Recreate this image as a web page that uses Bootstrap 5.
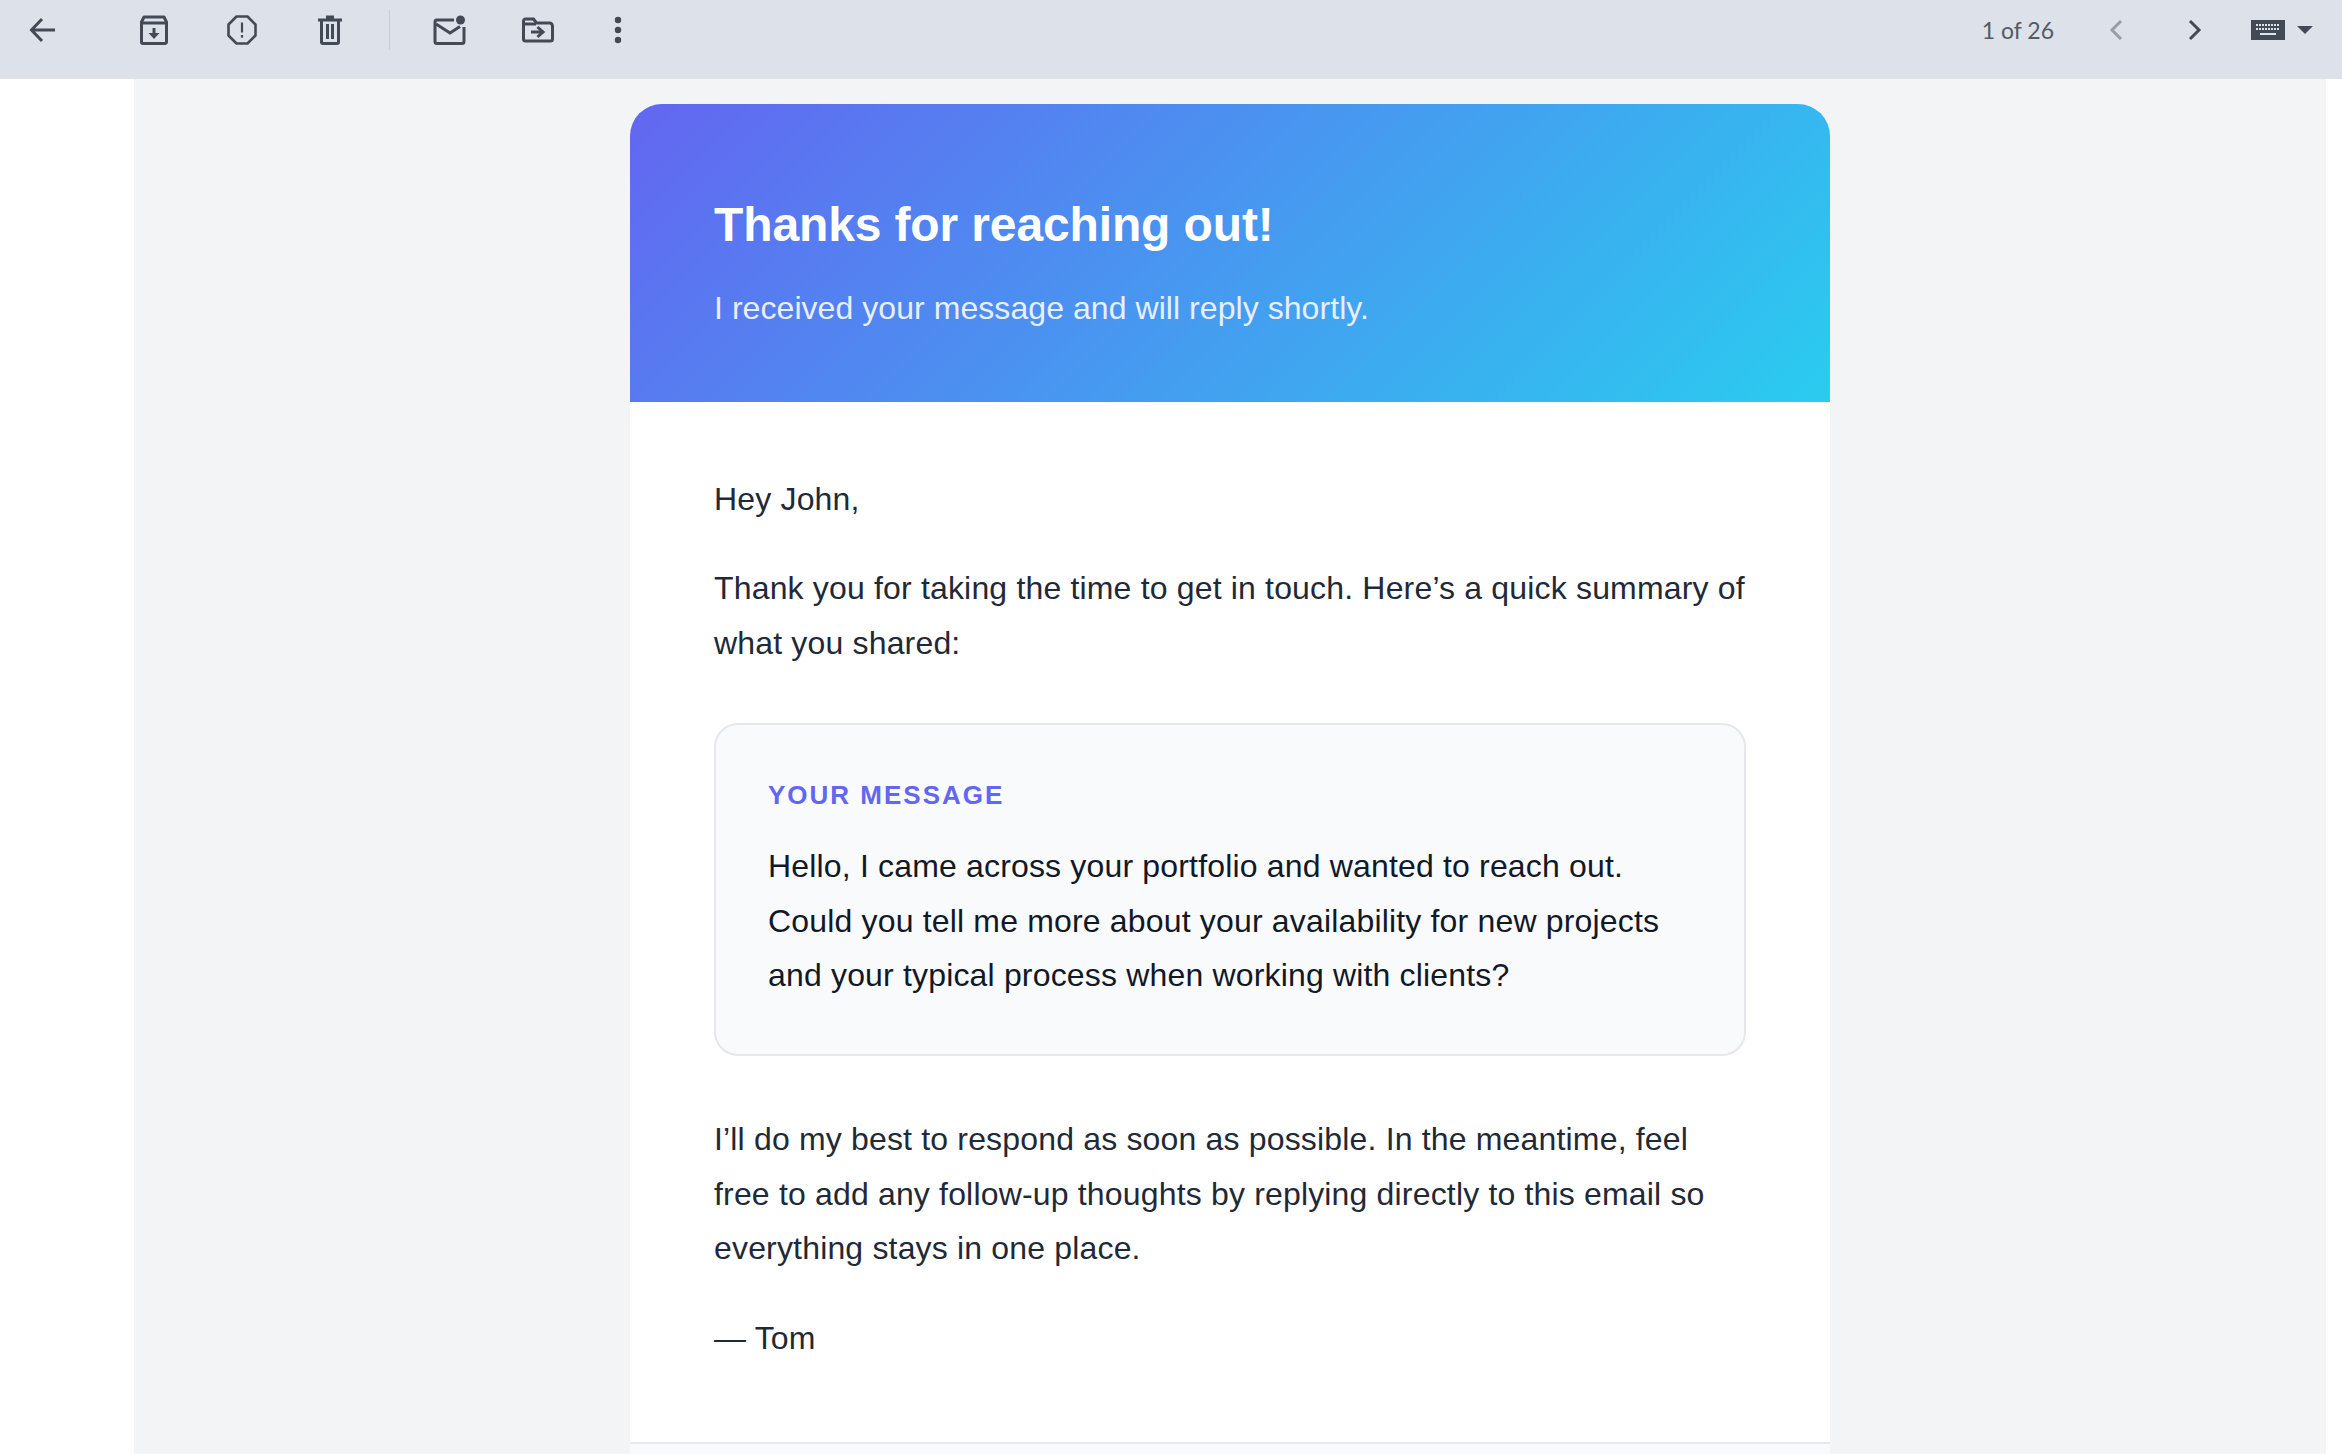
<!DOCTYPE html>
<html lang="en">
<head>
  <meta charset="UTF-8" />
  <title>Thanks for reaching out</title>
  <link href="https://cdn.jsdelivr.net/npm/bootstrap@5.3.0/dist/css/bootstrap.min.css" rel="stylesheet" />
  <style>
    body { height: 1454px; overflow: hidden; background: #fff; font-family: "Liberation Sans", Arial, sans-serif; }
    .mail-toolbar { height: 79px; background: #dde1e9; padding-bottom: 19px; }
    .tool-cell { width: 88px; height: 60px; }
    .tool-cell svg { display: block; }
    .tool-back { width: 84px; margin-right: 26px; }
    .tool-more { width: 72px; }
    .tool-divider { width: 1px; height: 40px; background: #c8ccd3; margin: 0 16px 0 15px; }
    .tool-count { font-family: Lato, "Liberation Sans", sans-serif; font-size: 23px; color: #555a63; margin-right: 32px; }
    .tool-nav { width: 60px; height: 60px; }
    .tool-next { margin-left: 19px; }
    .tool-kbd { margin-left: 26px; margin-right: 29px; }
    .mail-stage { background: #f3f4f6; margin: 0 16px 0 134px; height: 1375px; padding-top: 25px; }
    .mail-card { width: 1200px; margin-left: 496px; background: #fff; border-radius: 32px 32px 0 0; overflow: hidden; }
    .mail-hero { height: 298px; padding: 93px 84px 0; color: #fff; background: linear-gradient(135deg, #6366f1, #2accef); }
    .mail-hero h1 { font-size: 48px; font-weight: 700; line-height: 56px; letter-spacing: -0.13px; margin: 0 0 33px; }
    .mail-hero p { font-size: 32px; line-height: 44px; letter-spacing: 0.06px; margin: 0; color: #e8eefc; }
    .mail-body { padding: 70px 84px 77px; font-size: 32px; line-height: 54.4px; letter-spacing: 0.17px; color: #1f2937; }
    .mail-body p { margin: 0 0 35px; }
    .msg-box { background: #f9fafb; border: 2px solid #e5e7eb; border-radius: 24px; padding: 52px; margin: 53px 0 56px; color: #111827; }
    .msg-label { font-size: 26px; font-weight: 700; letter-spacing: 2px; line-height: 36px; color: #6366f1; margin-bottom: 26px; }
    .mail-foot { height: 40px; background: #f9fafb; border-top: 2px solid #e5e7eb; }
  </style>
</head>
<body>
<div class="mail-toolbar d-flex align-items-center">
  <div class="tool-cell tool-back d-flex align-items-center justify-content-center">
    <svg width="28" height="28" viewBox="0 0 28 28" fill="none" stroke="#444a55" stroke-width="3"><path d="M27 14H4M14 3 3.500 14 14 25"/></svg>
  </div>
  <div class="tool-cell d-flex align-items-center justify-content-center">
    <svg width="28" height="30" viewBox="0 0 28 30" fill="none" stroke="#444a55" stroke-width="3"><path d="M1.500 7V27a1.500 1.500 0 0 0 1.500 1.500h22a1.500 1.500 0 0 0 1.500-1.500V7L24 2H4z" stroke-linejoin="round"/><path d="M2 8h24"/><path d="M14 13v8" /><path d="M8.500 18h11L14 24z" fill="#444a55" stroke="none"/></svg>
  </div>
  <div class="tool-cell d-flex align-items-center justify-content-center">
    <svg width="30" height="30" viewBox="0 0 30 30" fill="none" stroke="#444a55" stroke-width="2.600"><path d="M9.500 1.500h11l8 8v11l-8 8h-11l-8-8v-11z" stroke-linejoin="round"/><path d="M15 7.500v10" stroke-width="2.200"/><path d="M15 20v2.600" stroke-width="2.200"/></svg>
  </div>
  <div class="tool-cell d-flex align-items-center justify-content-center">
    <svg width="26" height="30" viewBox="0 0 26 30" fill="none" stroke="#444a55" stroke-width="3"><path d="M1 5h24M9 2h8"/><path d="M4.500 5v22a1.500 1.500 0 0 0 1.500 1.500h14a1.500 1.500 0 0 0 1.500-1.500V5"/><path d="M10.500 9v15M15.500 9v15"/></svg>
  </div>
  <div class="tool-divider"></div>
  <div class="tool-cell d-flex align-items-center justify-content-center">
    <svg width="34" height="30" viewBox="0 0 34 30" fill="none" stroke="#444a55" stroke-width="3"><path d="M21 5H3.500a2 2 0 0 0-1.500 2v19.500a2 2 0 0 0 2 2h25a2 2 0 0 0 2-2V12"/><path d="m3 9 14 9 10-6.500"/><circle cx="27.500" cy="5" r="4.500" fill="#444a55" stroke="none"/></svg>
  </div>
  <div class="tool-cell d-flex align-items-center justify-content-center">
    <svg width="32" height="26" viewBox="0 0 32 26" fill="none" stroke="#444a55" stroke-width="3"><path d="M1.500 4a2 2 0 0 1 2-2h8l3 4h13a3 3 0 0 1 3 3v13a2 2 0 0 1-2 2H3.500a2 2 0 0 1-2-2z"/><path d="M2 7h12" /><path d="M9 15h11" /><path d="m15.500 10 5.500 5-5.500 5"/></svg>
  </div>
  <div class="tool-cell tool-more d-flex align-items-center justify-content-center">
    <svg width="8" height="28" viewBox="0 0 8 28" fill="#444a55"><circle cx="4" cy="4" r="3.200"/><circle cx="4" cy="14" r="3.200"/><circle cx="4" cy="24" r="3.200"/></svg>
  </div>
  <div class="tool-count ms-auto">1 of 26</div>
  <div class="tool-nav d-flex align-items-center justify-content-center">
    <svg width="14" height="22" viewBox="0 0 14 22" fill="none" stroke="#9a9da3" stroke-width="3"><path d="M12 2 3 11l9 9"/></svg>
  </div>
  <div class="tool-nav tool-next d-flex align-items-center justify-content-center">
    <svg width="14" height="22" viewBox="0 0 14 22" fill="none" stroke="#444a55" stroke-width="3"><path d="m2 2 9 9-9 9"/></svg>
  </div>
  <div class="tool-kbd d-flex align-items-center gap-2">
    <svg width="34" height="20" viewBox="0 0 34 20"><rect width="34" height="20" fill="#444a55"/><path d="M5 5h24M5 9h24" stroke="#dde1e9" stroke-width="2" stroke-dasharray="2 1"/><path d="M9 14h16" stroke="#dde1e9" stroke-width="2"/></svg>
    <svg class="ms-1" width="16" height="8" viewBox="0 0 16 8" fill="#444a55"><path d="M0 0h16L8 8z"/></svg>
  </div>
</div>

<div class="mail-stage">
  <div class="mail-card">
    <div class="mail-hero">
      <h1>Thanks for reaching out!</h1>
      <p>I received your message and will reply shortly.</p>
    </div>
    <div class="mail-body">
      <p>Hey John,</p>
      <p class="mb-0">Thank you for taking the time to get in touch. Here’s a quick summary of what you shared:</p>
      <div class="msg-box">
        <div class="msg-label">YOUR MESSAGE</div>
        <div>Hello, I came across your portfolio and wanted to reach out. Could you tell me more about your availability for new projects and your typical process when working with clients?</div>
      </div>
      <p>I’ll do my best to respond as soon as possible. In the meantime, feel free to add any follow-up thoughts by replying directly to this email so everything stays in one place.</p>
      <p class="mb-0">— Tom</p>
    </div>
    <div class="mail-foot"></div>
  </div>
</div>
<script src="https://cdn.jsdelivr.net/npm/bootstrap@5.3.0/dist/js/bootstrap.bundle.min.js"></script>
</body>
</html>
